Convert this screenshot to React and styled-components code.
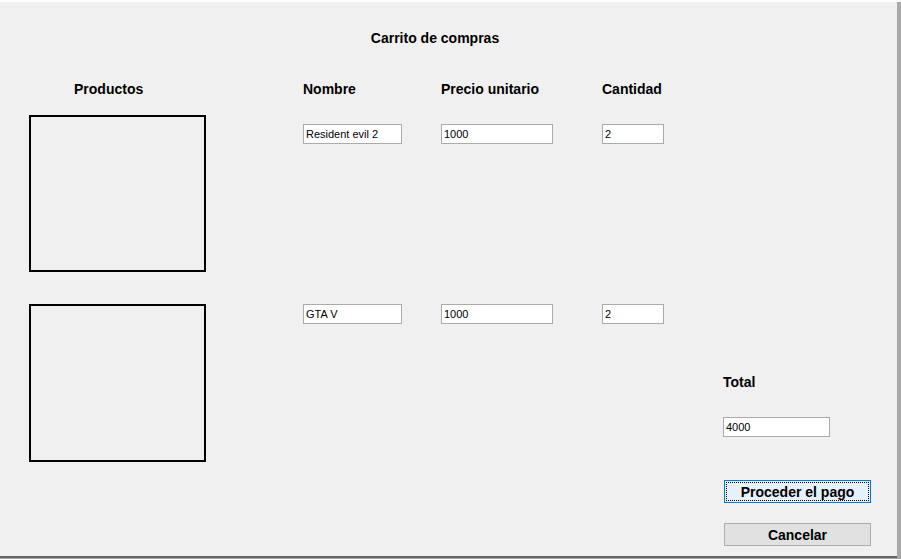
import styled, { createGlobalStyle } from "styled-components"

const Global = createGlobalStyle`
* { box-sizing: border-box; }
html, body {
    margin: 0;
    padding: 0;
    background-color: #a9a9a9;
    font-family: "Liberation Sans", Arial, sans-serif;
}
`

// ---------- window frame ----------
const Screen = styled.div`
width: 901px;
height: 559px;
border-top: 2px solid #ffffff;
overflow: hidden;
`

const Frame = styled.div`
width: 897px;
height: 556px;
background-color: #f0f0f0;
border-bottom: 2px solid #646464;
padding-top: 28px;
`

const Title = styled.h1`
margin: 0;
width: 870px;
text-align: center;
font-size: 14px;
line-height: 17px;
font-weight: 700;
color: #000;
`

// ---------- content layout ----------
const Content = styled.div`
display: flex;
margin-top: 33px;
padding-left: 29px;
`

const Grid = styled.div`
display: grid;
grid-template-columns: 274px 138px 161px 121px;
grid-template-rows: 17px 157px 158px;
row-gap: 18px;
width: 694px;
`

const Label = styled.div`
height: 17px;
padding-top: 1px;
padding-left: ${props => props.indent || '0px'};
font-size: 14px;
line-height: 17px;
font-weight: 700;
color: #000;
white-space: nowrap;
`

const ImageBox = styled.div`
width: 177px;
height: ${props => props.height || '157px'};
margin-top: ${props => props.space || '0px'};
border: 2px solid #000;
`

const Cell = styled.div`
margin-top: ${props => props.space || '0px'};
padding-top: ${props => props.offset || '0px'};
`

const Field = styled.input`
display: block;
width: ${props => props.width || '99px'};
height: 20px;
padding: 0 2px;
border: 1px solid #ababab;
background: #fff;
font-family: "Liberation Sans", Arial, sans-serif;
font-size: 11px;
color: #000;
outline: none;
`

// ---------- total / actions ----------
const Side = styled.div`
display: flex;
flex-direction: column;
align-items: flex-start;
padding-top: 293px;
width: 148px;
`

const SideField = styled(Field)`
margin-top: 27px;
`

const Button = styled.button`
position: relative;
width: 147px;
height: 23px;
margin-top: ${props => props.top || '20px'};
margin-left: 1px;
padding: 0;
border: 1px solid ${props => props.primary ? '#0078d7' : '#adadad'};
background: ${props => props.primary ? '#e5f1fb' : '#e1e1e1'};
font-family: "Liberation Sans", Arial, sans-serif;
font-size: 14px;
font-weight: 700;
color: #000;
cursor: pointer;
&::after {
    content: "";
    display: ${props => props.primary ? 'block' : 'none'};
    position: absolute;
    inset: 1px;
    border: 1px dotted #000;
}
`

const products = [
    { name: "Resident evil 2", price: "1000", qty: "2", offset: "9px", space: "0px", height: "157px" },
    { name: "GTA V", price: "1000", qty: "2", offset: "0px", space: "14px", height: "158px" },
]

const Row = ({ p }) => (
    <>
        <ImageBox height={p.height} space={p.space} />
        <Cell space={p.space} offset={p.offset}><Field defaultValue={p.name} /></Cell>
        <Cell space={p.space} offset={p.offset}><Field width="112px" defaultValue={p.price} /></Cell>
        <Cell space={p.space} offset={p.offset}><Field width="62px" defaultValue={p.qty} /></Cell>
    </>
)

export default function App() {
    return (
        <>
            <Global />
            <Screen>
                <Frame>
                    <Title>Carrito de compras</Title>
                    <Content>
                        <Grid>
                            <Label indent="45px">Productos</Label>
                            <Label>Nombre</Label>
                            <Label>Precio unitario</Label>
                            <Label>Cantidad</Label>
                            {products.map((p, i) => (
                                <Row key={i} p={p} />
                            ))}
                        </Grid>
                        <Side>
                            <Label>Total</Label>
                            <SideField width="107px" defaultValue="4000" />
                            <Button primary top="43px">Proceder el pago</Button>
                            <Button>Cancelar</Button>
                        </Side>
                    </Content>
                </Frame>
            </Screen>
        </>
    )
}
